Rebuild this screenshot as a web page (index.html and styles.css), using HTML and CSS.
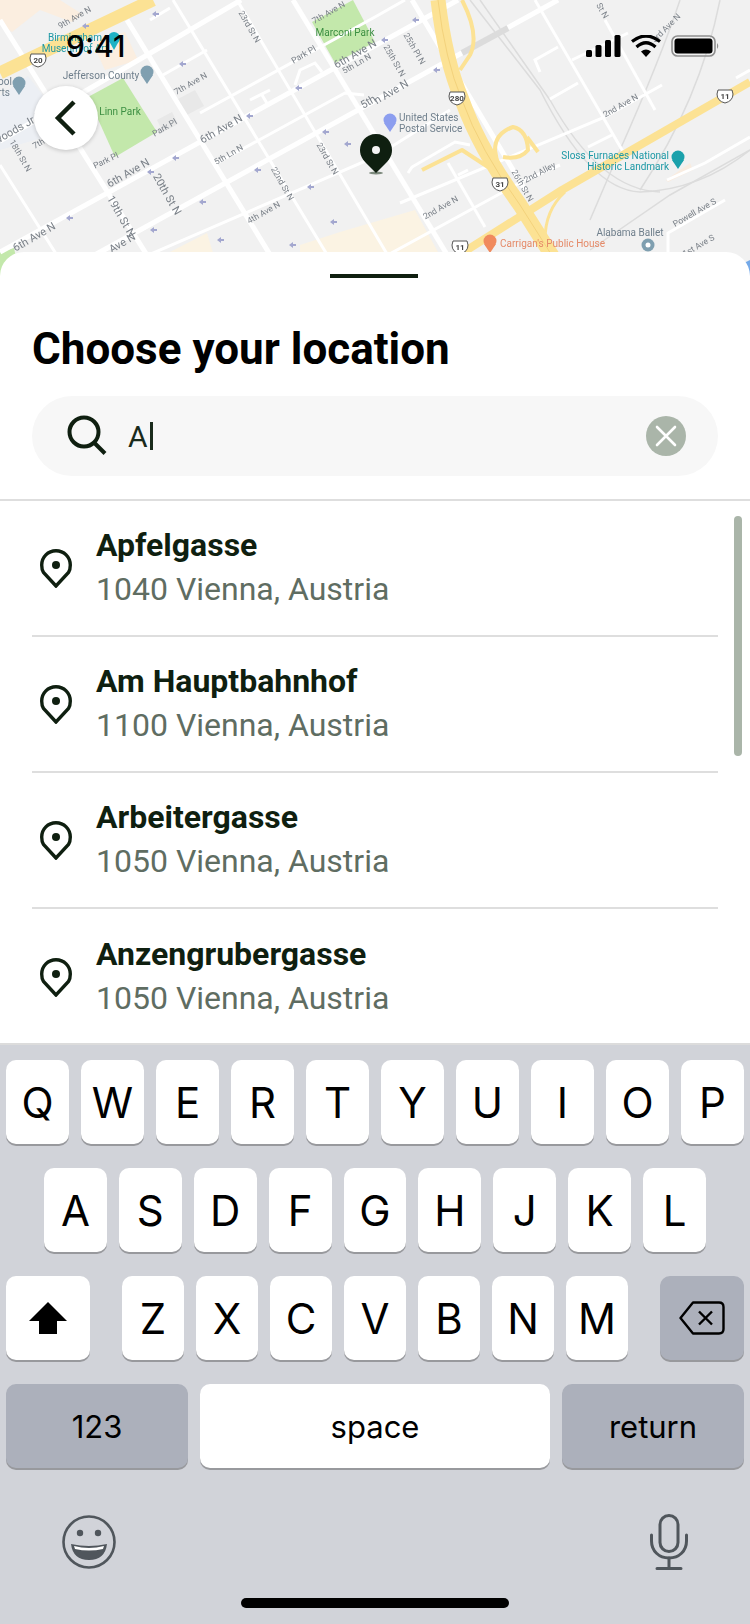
FILE: index.html
```html
<!DOCTYPE html>
<html lang="en">
<head>
    <meta charset="UTF-8">
    <meta name="viewport" content="width=device-width, initial-scale=1.0">
    <title>Choose your location</title>
    <link rel="stylesheet" href="styles.css">
</head>
<body>
    <div class="phone">
        <!-- Map backdrop -->
        <div class="map">
            <svg class="map-art" width="750" height="276" viewBox="0 0 750 276">
                <defs>
                    <path id="arrow" d="M-3 0 L1 -3 L1 -1 L4 -1 L4 1 L1 1 L1 3 Z" fill="#a3a7cf"/>
                    <g id="shield">
                        <path d="M-7 -6 H7 L8 -2 Q8 5 0 7 Q-8 5 -8 -2 Z" fill="#fff" stroke="#555" stroke-width="1"/>
                    </g>
                </defs>
                <rect width="750" height="276" fill="#f1f1f1"/>

                <!-- blocks and parks -->
                <path d="M0 0 H60 L82 14 L72 22 L40 10 L12 32 L0 24 Z" fill="#fbeee0"/>
                <path d="M92 42 L125 32 L138 60 L105 70 Z" fill="#fbeee0"/>
                <path d="M0 96 L28 76 L70 130 L0 150 Z" fill="#eceff4"/>
                <path d="M88 97 L123 78 L157 132 L115 157 Z" fill="#c3e8ab"/>
                <path d="M312 22 L353 0 L375 42 L335 63 Z" fill="#c3e8ab"/>
                <path d="M176 100 L195 90 L204 106 L185 116 Z" fill="#e8e8e8"/>
                <path d="M157 120 L172 112 L178 124 L163 132 Z" fill="#e8e8e8"/>
                <path d="M170 252 L207 233 L220 276 L170 276 Z" fill="#fbf3e3"/>
                <path d="M300 245 L340 232 L415 210 L438 252 L300 276 Z" fill="#fbf3e3"/>
                <path d="M666 180 L690 163 L693 170 L668 182 Z" fill="#f9ece0"/>
                <path d="M0 276 V252 L14 248 L20 276 Z" fill="#c3e8ab"/>
                <path d="M742 264 L750 260 V276 H742 Z" fill="#74a9e8"/>

                <!-- rail lines -->
                <g fill="none" stroke="#dcdcdc" stroke-width="1.5">
                    <path d="M470 0 L540 90 Q590 190 640 192 Q700 190 750 150"/>
                    <path d="M480 0 L550 100 Q600 190 660 192"/>
                    <path d="M590 250 L670 195 L750 150"/>
                    <path d="M680 0 Q660 60 620 150 L590 220"/>
                    <path d="M720 0 Q700 100 640 190"/>
                </g>

                <!-- main roads -->
                <g fill="none" stroke="#fff" stroke-width="5">
                    <path d="M0 141 L241 0"/>
                    <path d="M0 252 L458 0"/>
                    <path d="M0 307 L558 0"/>
                    <path d="M127 20 L283 276"/>
                    <path d="M0 20 L160 276"/>
                    <path d="M293 0 L460 276"/>
                    <path d="M412 0 L525 190"/>
                </g>
                <path d="M462 53 L508 28" stroke="#dcdcdc" stroke-width="6"/>

                <!-- side streets -->
                <g fill="none" stroke="#fff" stroke-width="3">
                    <path d="M163 75 L207 50"/>
                    <path d="M150 20 L170 8"/>
                    <path d="M200 113 L375 17 L405 0"/>
                    <path d="M217 163 L345 93 L364 95"/>
                    <path d="M70 276 L0 165"/>
                    <path d="M173 0 L340 276"/>
                    <path d="M237 0 L400 276"/>
                    <path d="M100 276 L375 157 L450 110"/>
                    <path d="M60 276 L200 197"/>
                    <path d="M535 0 L618 143 L625 155"/>
                    <path d="M605 20 L655 110"/>
                    <path d="M400 203 L605 117 L662 85"/>
                    <path d="M375 262 L525 180 L560 165"/>
                    <path d="M540 72 L535 60 L558 47"/>
                    <path d="M572 60 L628 33"/>
                    <path d="M550 99 L578 83"/>
                    <path d="M588 147 L612 135"/>
                    <path d="M408 173 L412 167 L455 142 L470 145"/>
                    <path d="M448 163 L485 227"/>
                    <path d="M458 175 L468 170"/>
                    <path d="M668 252 L668 233 L725 200"/>
                    <path d="M667 180 L705 163 L750 137"/>
                    <path d="M736 78 L750 70"/>
                    <path d="M250 100 L270 90 M262 95 L268 105"/>
                    <path d="M295 85 L300 70 L315 63 L322 72"/>
                </g>

                <!-- highways -->
                <g fill="none" stroke="#fce294" stroke-linejoin="round">
                    <path d="M0 73 L33 57 L153 0" stroke-width="13"/>
                    <path d="M438 0 Q445 60 462 100 Q480 150 520 205 L556 262" stroke-width="15"/>
                    <path d="M448 262 L562 190 L750 82" stroke-width="8"/>
                    <path d="M462 0 Q480 35 470 55 L460 70" stroke-width="4"/>
                    <path d="M422 170 L462 150 L488 167" stroke-width="4"/>
                    <path d="M498 167 L495 150 Q495 133 513 127 Q527 130 528 150 Q520 160 503 157" stroke-width="4"/>
                    <path d="M527 137 L538 152" stroke-width="4"/>
                    <path d="M545 240 Q545 210 565 192" stroke-width="3"/>
                </g>
                <path d="M438 0 Q445 60 462 100 Q480 150 520 205 L556 262" fill="none" stroke="#f3d27c" stroke-width="1"/>

                <!-- one way arrows -->
                <use href="#arrow" x="155" y="14"/>
                <use href="#arrow" x="182" y="64"/>
                <use href="#arrow" x="85" y="26"/>
                <use href="#arrow" x="175" y="158"/>
                <use href="#arrow" x="150" y="172"/>
                <use href="#arrow" x="69" y="218"/>
                <use href="#arrow" x="202" y="202"/>
                <use href="#arrow" x="153" y="230"/>
                <use href="#arrow" x="220" y="240"/>
                <use href="#arrow" x="249" y="116"/>
                <use href="#arrow" x="298" y="88"/>
                <use href="#arrow" x="325" y="132"/>
                <use href="#arrow" x="347" y="144"/>
                <use href="#arrow" x="310" y="187"/>
                <use href="#arrow" x="257" y="170"/>
                <use href="#arrow" x="333" y="222"/>
                <use href="#arrow" x="292" y="245"/>
                <use href="#arrow" x="415" y="20"/>
                <use href="#arrow" x="384" y="40"/>
                <use href="#arrow" x="436" y="70"/>

                <!-- street names -->
                <g class="road-label">
                    <text transform="translate(76 20) rotate(-30)">9th Ave N</text>
                    <text transform="translate(192 86) rotate(-30)">7th Ave N</text>
                    <text transform="translate(330 15) rotate(-30)">7th Ave N</text>
                    <text transform="translate(40 146) rotate(-30)">7th</text>
                    <text transform="translate(166 130) rotate(-30)">Park Pl</text>
                    <text transform="translate(107 163) rotate(-25)">Park Pl</text>
                    <text transform="translate(305 57) rotate(-30)">Park Pl</text>
                    <text transform="translate(230 157) rotate(-30)">5th Ln N</text>
                    <text transform="translate(358 66) rotate(-30)">5th Ln N</text>
                    <text transform="translate(265 215) rotate(-30)">4th Ave N</text>
                    <text transform="translate(247 28) rotate(60)">23rd St N</text>
                    <text transform="translate(325 160) rotate(60)">23rd St N</text>
                    <text transform="translate(280 185) rotate(60)">22nd St N</text>
                    <text transform="translate(18 157) rotate(60)">18th St N</text>
                    <text transform="translate(392 62) rotate(60)">25th St N</text>
                    <text transform="translate(412 50) rotate(60)">25th Pl N</text>
                    <text transform="translate(520 187) rotate(60)">26th St N</text>
                    <text transform="translate(541 175) rotate(-28)">2nd Alley</text>
                    <text transform="translate(622 108) rotate(-30)">2nd Ave N</text>
                    <text transform="translate(442 210) rotate(-30)">2nd Ave N</text>
                    <text transform="translate(696 215) rotate(-30)">Powell Ave S</text>
                    <text transform="translate(700 248) rotate(-30)">1st Ave S</text>
                    <text transform="translate(600 12) rotate(60)">St N</text>
                    <text transform="translate(668 30) rotate(-45)">3rd Ave N</text>
                </g>
                <g class="road-label road-label-big">
                    <text transform="translate(223 132) rotate(-30)">6th Ave N</text>
                    <text transform="translate(130 176) rotate(-30)">6th Ave N</text>
                    <text transform="translate(36 240) rotate(-30)">6th Ave N</text>
                    <text transform="translate(357 57) rotate(-30)">6th Ave N</text>
                    <text transform="translate(124 246) rotate(-30)">Ave N</text>
                    <text transform="translate(370 105) rotate(-30)">5th</text>
                    <text transform="translate(393 95) rotate(-30)">n Ave N</text>
                    <text transform="translate(164 196) rotate(60)">20th St N</text>
                    <text transform="translate(118 218) rotate(60)">19th St N</text>
                    <text transform="translate(20 131) rotate(-30)">woods Jr B</text>
                </g>

                <!-- places -->
                <text class="place teal" x="75" y="41">Birmingham</text>
                <text class="place teal" x="75" y="52">Museum of Art</text>
                <text class="place grey" x="101" y="79">Jefferson County</text>
                <text class="place grey" x="5" y="85">ool</text>
                <text class="place grey" x="4" y="96">rts</text>
                <text class="place green" x="120" y="115">Linn Park</text>
                <text class="place green" x="345" y="36">Marconi Park</text>
                <text class="place grey place-start" x="399" y="121">United States</text>
                <text class="place grey place-start" x="399" y="132">Postal Service</text>
                <text class="place teal place-end" x="669" y="159">Sloss Furnaces National</text>
                <text class="place teal place-end" x="669" y="170">Historic Landmark</text>
                <text class="place orange place-start" x="500" y="247">Carrigan's Public House</text>
                <text class="place grey" x="630" y="236">Alabama Ballet</text>

                <!-- place markers -->
                <circle cx="114" cy="38" r="6" fill="#1fb2c4"/>
                <path d="M109 41 L114 50 L119 41 Z" fill="#1fb2c4"/>
                <circle cx="147" cy="72" r="6.5" fill="#7f9fb0"/>
                <path d="M141 75 L147 84 L153 75 Z" fill="#7f9fb0"/>
                <circle cx="19" cy="83" r="6.5" fill="#7f9fb0"/>
                <path d="M13 86 L19 95 L25 86 Z" fill="#7f9fb0"/>
                <circle cx="390" cy="120" r="6.5" fill="#8c9eef"/>
                <path d="M384 123 L390 132 L396 123 Z" fill="#8c9eef"/>
                <circle cx="678" cy="157" r="6.5" fill="#1ba1ab"/>
                <path d="M672 160 L678 169 L684 160 Z" fill="#1ba1ab"/>
                <circle cx="490" cy="241" r="6.5" fill="#f08a5d"/>
                <path d="M484 244 L490 253 L496 244 Z" fill="#f08a5d"/>
                <circle cx="648" cy="245" r="6.5" fill="#7f9fb0"/>
                <circle cx="648" cy="245" r="2.5" fill="#fff"/>

                <!-- road shields -->
                <use href="#shield" x="38" y="60"/>
                <use href="#shield" x="457" y="98"/>
                <use href="#shield" x="500" y="184"/>
                <use href="#shield" x="725" y="96"/>
                <use href="#shield" x="460" y="247"/>
                <g class="shield-label">
                    <text x="38" y="63">20</text>
                    <text x="457" y="101">280</text>
                    <text x="500" y="187">31</text>
                    <text x="725" y="99">11</text>
                    <text x="460" y="250">11</text>
                </g>
            </svg>

            <svg class="map-pin" width="36" height="44" viewBox="0 0 36 44">
                <ellipse cx="18" cy="40" rx="7" ry="1.5" fill="#7d8a7d"/>
                <path d="M18 1 C8 1 2 9 2 17 C2 23 5 27 9 31 L18 40 L27 31 C31 27 34 23 34 17 C34 9 28 1 18 1 Z" fill="#0f1f10"/>
                <circle cx="18" cy="17" r="4" fill="#f4f4f4"/>
            </svg>

            <div class="status-bar">
                <span class="status-time">9:41</span>
                <div class="status-icons">
                    <svg width="35" height="22" viewBox="0 0 35 22">
                        <rect x="0" y="15" width="6" height="7" rx="1.5"/>
                        <rect x="9.5" y="10" width="6" height="12" rx="1.5"/>
                        <rect x="19" y="5" width="6" height="17" rx="1.5"/>
                        <rect x="28.5" y="0" width="6" height="22" rx="1.5"/>
                    </svg>
                    <svg width="30" height="22" viewBox="0 0 30 22">
                        <path d="M15 22 L10 16.5 Q15 12.5 20 16.5 Z"/>
                        <path d="M5.5 12 Q15 3.5 24.5 12" fill="none" stroke="#000" stroke-width="3.2"/>
                        <path d="M1 6.5 Q15 -4.5 29 6.5" fill="none" stroke="#000" stroke-width="3.2"/>
                    </svg>
                    <svg width="49" height="22" viewBox="0 0 49 22">
                        <rect x="1" y="1" width="43" height="20" rx="5.5" fill="none" stroke="#8f8f8f" stroke-width="1.6"/>
                        <rect x="3.5" y="3.5" width="38" height="15" rx="3"/>
                        <path d="M46 8 Q48.5 11 46 14 Z" fill="#8f8f8f"/>
                    </svg>
                </div>
            </div>

            <button class="back-btn" aria-label="Back">
                <svg width="24" height="38" viewBox="0 0 24 38">
                    <path d="M20 3 L4 19 L20 35" fill="none" stroke="#0f1f10" stroke-width="4.5"/>
                </svg>
            </button>
        </div>

        <!-- Bottom sheet -->
        <main class="sheet">
            <div class="sheet-handle"></div>
            <h1 class="sheet-title">Choose your location</h1>

            <div class="search-wrap">
                <div class="search-box">
                    <svg class="search-icon" width="42" height="42" viewBox="0 0 42 42">
                        <circle cx="18" cy="17" r="14.5" fill="none" stroke="#0f1f10" stroke-width="4"/>
                        <path d="M28 27.5 L39 38.5" fill="none" stroke="#0f1f10" stroke-width="4"/>
                    </svg>
                    <span class="search-text">A</span><span class="search-caret"></span>
                    <span class="search-clear">
                        <svg width="22" height="22" viewBox="0 0 22 22">
                            <path d="M2 2 L20 20 M20 2 L2 20" fill="none" stroke="#fff" stroke-width="2.6" stroke-linecap="round"/>
                        </svg>
                    </span>
                </div>
            </div>

            <ul class="result-list">
                <li class="result-row">
                    <svg class="result-pin" width="32" height="39" viewBox="0 0 32 39">
                        <path d="M16 37 L3.500 23.500 C2.200 21.500 1.700 19 1.700 16 C1.700 8 8 1.700 16 1.700 C24 1.700 30.300 8 30.300 16 C30.300 19 29.800 21.500 28.500 23.500 Z" fill="none" stroke="#0f1f10" stroke-width="3.4" stroke-linejoin="miter"/>
                        <circle cx="16" cy="16" r="4" fill="#0f1f10"/>
                    </svg>
                    <div class="result-text">
                        <div class="result-name">Apfelgasse</div>
                        <div class="result-addr">1040 Vienna, Austria</div>
                    </div>
                </li>
                <li class="result-row">
                    <svg class="result-pin" width="32" height="39" viewBox="0 0 32 39">
                        <path d="M16 37 L3.500 23.500 C2.200 21.500 1.700 19 1.700 16 C1.700 8 8 1.700 16 1.700 C24 1.700 30.300 8 30.300 16 C30.300 19 29.800 21.500 28.500 23.500 Z" fill="none" stroke="#0f1f10" stroke-width="3.4" stroke-linejoin="miter"/>
                        <circle cx="16" cy="16" r="4" fill="#0f1f10"/>
                    </svg>
                    <div class="result-text">
                        <div class="result-name">Am Hauptbahnhof</div>
                        <div class="result-addr">1100 Vienna, Austria</div>
                    </div>
                </li>
                <li class="result-row">
                    <svg class="result-pin" width="32" height="39" viewBox="0 0 32 39">
                        <path d="M16 37 L3.500 23.500 C2.200 21.500 1.700 19 1.700 16 C1.700 8 8 1.700 16 1.700 C24 1.700 30.300 8 30.300 16 C30.300 19 29.800 21.500 28.500 23.500 Z" fill="none" stroke="#0f1f10" stroke-width="3.4" stroke-linejoin="miter"/>
                        <circle cx="16" cy="16" r="4" fill="#0f1f10"/>
                    </svg>
                    <div class="result-text">
                        <div class="result-name">Arbeitergasse</div>
                        <div class="result-addr">1050 Vienna, Austria</div>
                    </div>
                </li>
                <li class="result-row">
                    <svg class="result-pin" width="32" height="39" viewBox="0 0 32 39">
                        <path d="M16 37 L3.500 23.500 C2.200 21.500 1.700 19 1.700 16 C1.700 8 8 1.700 16 1.700 C24 1.700 30.300 8 30.300 16 C30.300 19 29.800 21.500 28.500 23.500 Z" fill="none" stroke="#0f1f10" stroke-width="3.4" stroke-linejoin="miter"/>
                        <circle cx="16" cy="16" r="4" fill="#0f1f10"/>
                    </svg>
                    <div class="result-text">
                        <div class="result-name">Anzengrubergasse</div>
                        <div class="result-addr">1050 Vienna, Austria</div>
                    </div>
                </li>
                <li class="list-scrollbar"></li>
            </ul>
        </main>

        <!-- Keyboard -->
        <div class="keyboard">
            <div class="key-row">
                <span class="key">Q</span><span class="key">W</span><span class="key">E</span><span class="key">R</span><span class="key">T</span><span class="key">Y</span><span class="key">U</span><span class="key">I</span><span class="key">O</span><span class="key">P</span>
            </div>
            <div class="key-row key-row-home">
                <span class="key">A</span><span class="key">S</span><span class="key">D</span><span class="key">F</span><span class="key">G</span><span class="key">H</span><span class="key">J</span><span class="key">K</span><span class="key">L</span>
            </div>
            <div class="key-row key-row-shift">
                <span class="key key-shift">
                    <svg width="38" height="32" viewBox="0 0 38 32">
                        <path d="M19 0 L38 19 L28 19 L28 32 L10 32 L10 19 L0 19 Z" fill="#000"/>
                    </svg>
                </span>
                <div class="key-letters">
                    <span class="key">Z</span><span class="key">X</span><span class="key">C</span><span class="key">V</span><span class="key">B</span><span class="key">N</span><span class="key">M</span>
                </div>
                <span class="key key-dark key-delete">
                    <svg width="46" height="34" viewBox="0 0 46 34">
                        <path d="M14 1.500 H40 Q44.500 1.500 44.500 6 V28 Q44.500 32.500 40 32.500 H14 L1.500 17 Z" fill="none" stroke="#000" stroke-width="2.400" stroke-linejoin="round"/>
                        <path d="M20 10.500 L33 23.500 M33 10.500 L20 23.500" fill="none" stroke="#000" stroke-width="2.400"/>
                    </svg>
                </span>
            </div>
            <div class="key-row key-row-bottom">
                <span class="key key-dark key-label key-side">123</span>
                <span class="key key-label key-space">space</span>
                <span class="key key-dark key-label key-side">return</span>
            </div>
            <div class="key-extras">
                <svg width="56" height="56" viewBox="0 0 56 56">
                    <circle cx="28" cy="28" r="25.500" fill="none" stroke="#50565c" stroke-width="2.600"/>
                    <circle cx="19" cy="19" r="3.200" fill="#50565c"/>
                    <circle cx="37" cy="19" r="3.200" fill="#50565c"/>
                    <path d="M10 30 Q28 34 46 30 Q44 46 28 46 Q12 46 10 30 Z" fill="#50565c"/>
                    <path d="M13 32 Q28 36 43 32 L42 35 Q28 38 14 35 Z" fill="#fff"/>
                </svg>
                <svg width="38" height="56" viewBox="0 0 38 56">
                    <rect x="10" y="1.500" width="18" height="36" rx="9" fill="none" stroke="#50565c" stroke-width="3"/>
                    <path d="M1.500 21 V27 C1.500 37 9 44 19 44 C29 44 36.500 37 36.500 27 V21" fill="none" stroke="#50565c" stroke-width="3" stroke-linecap="round"/>
                    <path d="M19 44 V54 M7 54.500 H31" fill="none" stroke="#50565c" stroke-width="3" stroke-linecap="round"/>
                </svg>
            </div>
            <div class="home-indicator"></div>
        </div>
    </div>
</body>
</html>
```

FILE: styles.css
```css
* {
    box-sizing: border-box;
}
body {
    margin: 0;
    font-family: Roboto, Arial, sans-serif;
    background-color: #fff;
}
.phone {
    width: 750px;
    height: 1624px;
    overflow: hidden;
    position: relative;
    display: flex;
    flex-direction: column;
}

/* map */
.map {
    height: 276px;
    flex: none;
    position: relative;
    overflow: hidden;
    background-color: #f1f1f1;
}
.map-art {
    display: block;
    filter: blur(0.6px);
}
.road-label text {
    font-family: Roboto, sans-serif;
    font-size: 8.500px;
    fill: #7a8088;
    text-anchor: middle;
}
.road-label-big text {
    font-size: 11px;
}
.place {
    font-family: Roboto, sans-serif;
    font-size: 10px;
    text-anchor: middle;
}
.place-start {
    text-anchor: start;
}
.place-end {
    text-anchor: end;
}
.teal {
    fill: #1c98a5;
}
.grey {
    fill: #6f7f8c;
}
.green {
    fill: #3c8f42;
}
.orange {
    fill: #e58a68;
}
.shield-label text {
    font-family: Roboto, sans-serif;
    font-size: 8px;
    font-weight: 700;
    fill: #444;
    text-anchor: middle;
}
.map-pin {
    position: absolute;
    left: 358px;
    top: 133px;
}
.status-bar {
    position: absolute;
    left: 0;
    right: 0;
    top: 27px;
    height: 38px;
    display: flex;
    align-items: center;
    justify-content: space-between;
    padding: 0 30px 0 66px;
}
.status-time {
    font-family: Inter, sans-serif;
    font-size: 30px;
    font-weight: 500;
    color: #000;
}
.status-icons {
    display: flex;
    align-items: center;
    gap: 10px;
}
.status-icons svg {
    display: block;
}
.back-btn {
    position: absolute;
    left: 34px;
    top: 86px;
    width: 64px;
    height: 64px;
    border: none;
    border-radius: 50%;
    padding: 0;
    background-color: #fff;
    box-shadow: 0 1px 4px rgba(0, 0, 0, 0.2);
    display: flex;
    align-items: center;
    justify-content: center;
}

/* sheet */
.sheet {
    flex: none;
    height: 791px;
    margin-top: -24px;
    position: relative;
    background-color: #fff;
    border-radius: 24px 24px 0 0;
    overflow: hidden;
}
.sheet-handle {
    width: 88px;
    height: 4px;
    margin: 22px 0 0 330px;
    background-color: #0f1f10;
}
.sheet-title {
    margin: 47px 0 0 32px;
    font-size: 44px;
    line-height: 48px;
    font-weight: 700;
    color: #000;
}
.search-wrap {
    margin-top: 23px;
    padding: 0 32px 23px;
    border-bottom: 2px solid #dedede;
}
.search-box {
    height: 80px;
    padding: 0 32px 0 34px;
    border-radius: 40px;
    background-color: #f7f7f7;
    display: flex;
    align-items: center;
}
.search-icon {
    flex: none;
}
.search-text {
    margin-left: 20px;
    font-size: 30px;
    color: #1a2b1c;
}
.search-caret {
    width: 3px;
    height: 28px;
    margin-left: 2px;
    background-color: #1a2b1c;
}
.search-clear {
    width: 40px;
    height: 40px;
    margin-left: auto;
    border-radius: 50%;
    background-color: #aab5a9;
    display: flex;
    align-items: center;
    justify-content: center;
}

/* results */
.result-list {
    list-style: none;
    margin: 0;
    padding: 0 32px;
    position: relative;
}
.result-row {
    height: 136px;
    border-bottom: 2px solid #dedede;
    display: flex;
    align-items: center;
    gap: 24px;
    padding-left: 8px;
}
.result-row:nth-child(4) {
    border-bottom: none;
}
.result-pin {
    flex: none;
}
.result-name {
    font-size: 32px;
    line-height: 40px;
    font-weight: 700;
    color: #0f1f10;
}
.result-addr {
    margin-top: 2px;
    margin-left: 0;
    font-size: 32px;
    line-height: 44px;
    color: #5f6d62;
}
.list-scrollbar {
    position: absolute;
    top: 15px;
    right: 8px;
    width: 8px;
    height: 240px;
    border-radius: 4px;
    background-color: #aab5a9;
}

/* keyboard */
.keyboard {
    flex: 1;
    padding: 15px 6px 0;
    border-top: 2px solid #dcdcdc;
    background-color: #d1d3d9;
}
.key-row {
    display: flex;
    justify-content: center;
    gap: 12px;
    margin-bottom: 24px;
}
.key {
    flex: 1;
    height: 84px;
    border-radius: 10px;
    background-color: #fff;
    box-shadow: 0 2px 0 #98999d;
    display: flex;
    align-items: center;
    justify-content: center;
    font-family: Inter, sans-serif;
    font-size: 42px;
    color: #000;
}
.key-row-home {
    padding: 0 38px;
}
.key-shift,
.key-delete {
    flex: 0 0 84px;
}
.key-letters {
    flex: 1;
    display: flex;
    gap: 12px;
    margin: 0 20px 0 20px;
}
.key-dark {
    background-color: #acb0bb;
}
.key-label {
    font-size: 31px;
    padding-top: 1px;
}
.key-side {
    flex: 0 0 182px;
}
.key-space {
    flex: 1;
}
.key-extras {
    display: flex;
    justify-content: space-between;
    padding: 0 56px 0 55px;
    margin-top: 46px;
    height: 56px;
}
.home-indicator {
    width: 268px;
    height: 10px;
    margin: 28px auto 0;
    border-radius: 5px;
    background-color: #000;
}
```
